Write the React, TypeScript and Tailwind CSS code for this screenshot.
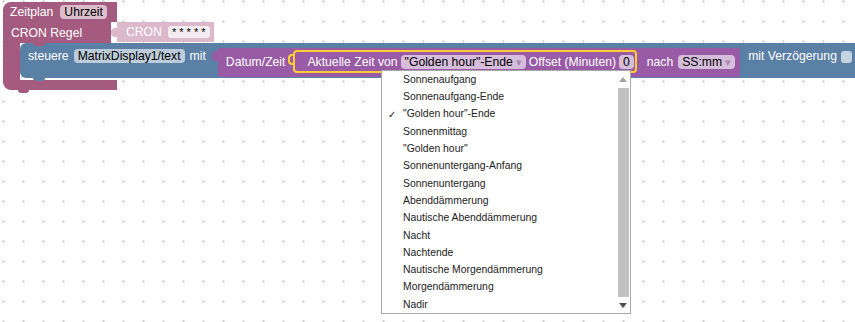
import React from "react";

const sunTimes = [
  "Sonnenaufgang",
  "Sonnenaufgang-Ende",
  '"Golden hour"-Ende',
  "Sonnenmittag",
  '"Golden hour"',
  "Sonnenuntergang-Anfang",
  "Sonnenuntergang",
  "Abenddämmerung",
  "Nautische Abenddämmerung",
  "Nacht",
  "Nachtende",
  "Nautische Morgendämmerung",
  "Morgendämmerung",
  "Nadir",
];

const selected = '"Golden hour"-Ende';

// editable field inside a block (light box with dark text)
const Field = ({
  children,
  arrow,
  className = "",
}: {
  children: React.ReactNode;
  arrow?: boolean;
  className?: string;
}) => (
  <span
    className={`flex h-[14px] shrink-0 items-center whitespace-nowrap rounded-[4px] bg-white/60 px-[4px] text-[12.2px] leading-[14px] text-black ${className}`}
  >
    {children}
    {arrow && <span className="ml-[3px] text-[11px] leading-[14px] text-[#a48ab0]">▾</span>}
  </span>
);

const Label = ({ children, className = "" }: { children: React.ReactNode; className?: string }) => (
  <span className={`h-[14px] shrink-0 whitespace-nowrap text-[12.2px] leading-[14px] text-white ${className}`}>
    {children}
  </span>
);

const GridBackground = () => (
  <svg className="absolute inset-0" width="855" height="322">
    <defs>
      <pattern id="ws-grid" x="-7" y="-9" width="20" height="20" patternUnits="userSpaceOnUse">
        <path d="M9 10.5h3M10.5 9v3" stroke="#d4d4d4" strokeWidth="1" />
      </pattern>
    </defs>
    <rect width="100%" height="100%" fill="url(#ws-grid)" />
  </svg>
);

const SunTimeMenu = () => (
  <div className="absolute left-[381px] top-[70px] flex h-[244px] w-[250px] border border-[#a8a8a8] bg-white">
    <div className="flex-1">
      {sunTimes.map((name) => (
        <div key={name} className="flex h-[17.3px] items-center text-[10.4px] text-[#222]">
          <span className="w-[21px] shrink-0 pl-[6px] text-[10px]">{name === selected ? "✓" : ""}</span>
          <span className="whitespace-nowrap">{name}</span>
        </div>
      ))}
    </div>
    <div className="flex w-[14px] flex-col items-center">
      <div className="flex h-[17px] items-center justify-center">
        <svg width="8" height="5">
          <polygon points="0,5 4,0 8,5" fill="#a3a3a3" />
        </svg>
      </div>
      <div className="w-[11px] flex-1 bg-[#c1c1c1]" />
      <div className="flex h-[16px] items-center justify-center">
        <svg width="8" height="5">
          <polygon points="0,0 4,5 8,0" fill="#505050" />
        </svg>
      </div>
    </div>
  </div>
);

const DateTimeBlock = () => (
  <div className="mt-[5px] flex shrink-0">
    <div className="mt-[3px] h-[10px] w-[6px] rounded-l-[4px] bg-[#995ba5]" />
    <div className="flex h-[29px] items-start rounded-[2px] bg-[#995ba5] pl-[8px] pr-[5px]">
      <Label className="mt-[7px]">Datum/Zeit</Label>
      <div className="ml-[3px] mt-[6px] h-[11px] w-[5px] rounded-l-[4px] border-2 border-r-0 border-[#ffcc33]" />
      <div className="mt-[2px] flex h-[23px] items-start rounded-[4px] border-2 border-[#ffcc33] pl-[12px] pr-[1px] pt-[3px]">
        <Label>Aktuelle Zeit von</Label>
        <Field arrow className="ml-[3px]">
          "Golden hour"-Ende
        </Field>
        <Label className="ml-[3px]">Offset (Minuten)</Label>
        <Field className="ml-[3px]">0</Field>
      </div>
      <Label className="ml-[10px] mt-[7px]">nach</Label>
      <Field arrow className="ml-[5px] mt-[7px]">
        SS:mm
      </Field>
    </div>
  </div>
);

const ControlBlock = () => (
  <div className="relative flex h-[35px] w-[860px] shrink-0 items-start rounded-l-[6px] bg-[#5b80a5] pl-[8px]">
    <div className="absolute left-[13px] top-0 h-[3px] w-[12px] rounded-b-[3px] bg-[#a55b80]" />
    <div className="absolute -bottom-[3px] left-[13px] h-[3px] w-[12px] rounded-b-[3px] bg-[#5b80a5]" />
    <Label className="mt-[6px]">steuere</Label>
    <Field className="ml-[5px] mt-[6px]">MatrixDisplay1/text</Field>
    <Label className="ml-[5px] mt-[6px]">mit</Label>
    <div className="ml-[6px]">
      <DateTimeBlock />
    </div>
    <Label className="ml-[8px] mt-[6px]">mit Verzögerung</Label>
    <div className="ml-[4px] mt-[8px] h-[12px] w-[11px] rounded-[3px] bg-white/65" />
  </div>
);

const ScheduleBlock = () => (
  <div className="flex flex-col items-start">
    <div className="flex h-[20px] w-[114px] items-center rounded-tl-[8px] bg-[#a55b80] pl-[7px]">
      <Label>Zeitplan</Label>
      <Field className="ml-[7px]">Uhrzeit</Field>
    </div>
    <div className="flex items-start">
      <div className="flex h-[21px] w-[108px] items-center bg-[#a55b80] pl-[8px]">
        <Label>CRON Regel</Label>
      </div>
      <div className="mt-[6px] h-[9px] w-[6px] rounded-l-[4px] bg-[#dcb8cb]" />
      <div className="flex h-[20px] items-center bg-[#dcb8cb] pl-[9px] pr-[4px]">
        <Label className="text-[#fbf3f7]">CRON</Label>
        <span className="ml-[6px] flex h-[12px] items-center rounded-[3px] bg-[#f4ecf0] px-[4px] text-[11px] leading-[12px] text-black">
          * * * * *
        </span>
      </div>
    </div>
    <div className="flex h-[37px]">
      <div className="h-full w-[17px] shrink-0 bg-[#a55b80]" />
      <ControlBlock />
    </div>
    <div className="h-[10px] w-[114px] rounded-bl-[8px] bg-[#a55b80]" />
    <div className="ml-[15px] h-[3px] w-[11px] rounded-b-[3px] bg-[#a55b80]" />
  </div>
);

export default function App() {
  return (
    <div className="relative h-[322px] w-[855px] overflow-hidden bg-white font-['Liberation_Sans',Arial,sans-serif]">
      <GridBackground />
      <div className="relative pl-[3px] pt-[2px]">
        <ScheduleBlock />
      </div>
      <SunTimeMenu />
    </div>
  );
}
